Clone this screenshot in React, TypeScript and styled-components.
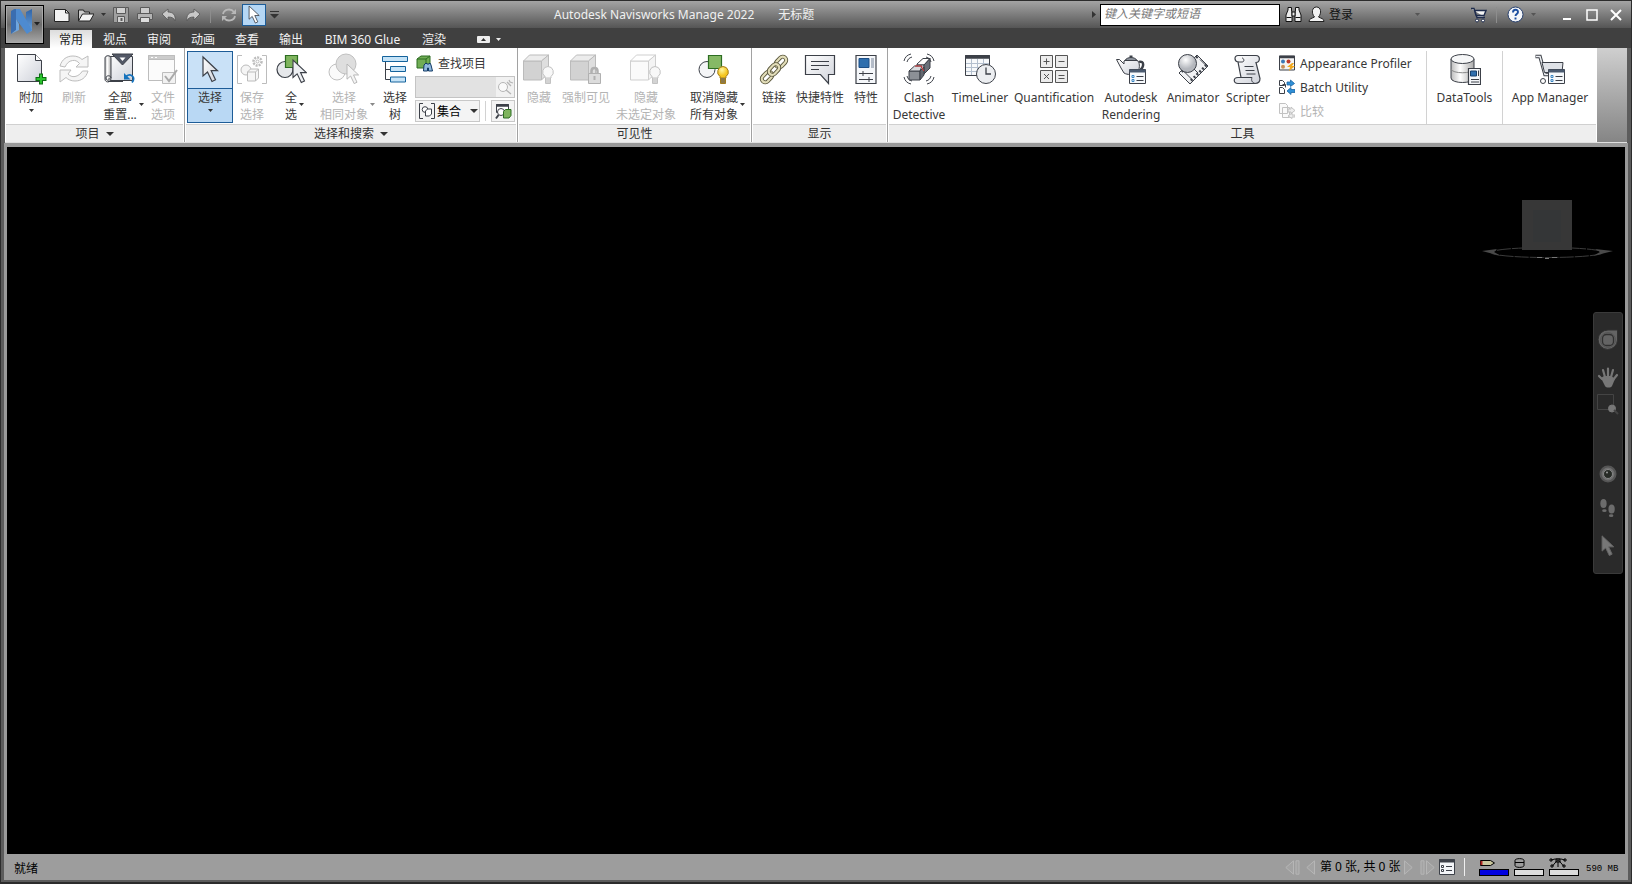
import React from "react";
import styled, { createGlobalStyle, css } from "styled-components";

const ui = `"Noto Sans", "Noto Sans CJK SC", sans-serif`;
const ink = "#3c4048";

const Global = createGlobalStyle`
  * { box-sizing: border-box; }
  body { margin: 0; background: #2c2c2c; font: 12px/17px ${ui}; color: #333; }
  button, input, select { font: inherit; color: inherit; margin: 0; }
  svg { display: block; flex: none; }
`;

/* ---------- window frame ---------- */
const Window = styled.div`
  display: flex;
  flex-direction: column;
  min-height: 100vh;
  padding-bottom: 2px;
  border: solid #2c2c2c;
  border-width: 1px 1px 2px 1px;
  background: #5c5c5c;
`;

const Header = styled.header`
  display: flex;
  height: 47px;
  padding-left: 4px;
  background: linear-gradient(#a4a4a4 0, #8a8a8a 9px, #555 27px, #404040 27px);
`;

const AppButton = styled.button`
  display: flex;
  align-items: center;
  justify-content: center;
  flex: none;
  width: 39px;
  height: 39px;
  margin-top: 4px;
  padding: 0;
  border: 1px solid #000;
  box-shadow: inset 0 0 0 1px #aaa;
  background: linear-gradient(#9a9a9a, #6c6c6c 50%, #a8a8a8);
`;

const HeaderRows = styled.div`
  display: flex;
  flex-direction: column;
  flex: 1;
  min-width: 0;
`;

const TitleBar = styled.div`
  display: flex;
  align-items: center;
  height: 27px;
`;

const QuickAccess = styled.div`
  display: flex;
  align-items: center;
  width: 510px;
  padding-left: 6px;
  flex: none;
`;

const QuickButton = styled.button<{ $w?: number; $before?: number; $active?: boolean }>`
  display: flex;
  align-items: center;
  justify-content: center;
  flex: none;
  width: ${(p) => p.$w ?? 24}px;
  height: 22px;
  margin-left: ${(p) => p.$before ?? 0}px;
  padding: 0;
  border: 1px solid ${(p) => (p.$active ? "#1d5c97" : "transparent")};
  background: ${(p) => (p.$active ? "#b5d7f5" : "none")};
`;

const ThinRule = styled.span<{ $gap?: number }>`
  width: 1px;
  height: 16px;
  margin: 0 ${(p) => p.$gap ?? 8}px;
  background: #8d8d8d;
`;

const Title = styled.h1`
  display: flex;
  gap: 24px;
  margin: 0;
  flex: 1;
  font: 12px/17px ${ui};
  color: #f0f0f0;
  white-space: nowrap;
`;

const InfoCenter = styled.div`
  display: flex;
  align-items: center;
`;

const WindowTools = styled(InfoCenter)`
  padding-right: 3px;
`;

const HelpSearch = styled.input`
  width: 180px;
  height: 22px;
  margin-right: 1px;
  padding: 0 3px 2px;
  border: 1px solid #000;
  border-radius: 0;
  background: #fff;
  outline: none;
  &::placeholder { color: #777; font-style: italic; opacity: 1; }
`;

const SignIn = styled.button`
  display: flex;
  align-items: center;
  gap: 4px;
  width: 105px;
  padding: 0 0 0 3px;
  border: 0;
  background: none;
  color: #111;
`;

const Tabs = styled.nav`
  display: flex;
  align-items: flex-end;
  height: 20px;
  padding-left: 6px;
`;

const Tab = styled.button<{ $w?: number; $active?: boolean }>`
  width: ${(p) => p.$w ?? 44}px;
  height: 18px;
  padding: 0;
  border: 0;
  background: none;
  color: #f2f2f2;
  line-height: 17px;
  white-space: nowrap;
  ${(p) =>
    p.$active &&
    css`
      width: 42px;
      margin-right: 1px;
      background: linear-gradient(#dcdcdc, #fff);
      color: #222;
    `}
`;

const RibbonToggle = styled.button`
  display: flex;
  align-items: center;
  gap: 6px;
  height: 16px;
  margin: 0 0 1px 21px;
  padding: 0;
  border: 0;
  background: none;
`;

/* ---------- ribbon ---------- */
const Ribbon = styled.div`
  display: flex;
  height: 95px;
  margin: 0 4px;
  border-bottom: 1px solid #e0e0e0;
  background: #fff;
`;

const Panel = styled.section<{ $w: number; $last?: boolean }>`
  display: flex;
  flex-direction: column;
  flex: none;
  width: ${(p) => p.$w}px;
  border-right: ${(p) => (p.$last ? "0" : "1px solid #a2a2a2")};
`;

const PanelBody = styled.div<{ $pad?: number }>`
  display: flex;
  align-items: flex-start;
  height: 76px;
  padding: 3px 0 0 ${(p) => p.$pad ?? 2}px;
`;

const PanelTitle = styled.h2`
  display: flex;
  align-items: center;
  justify-content: center;
  gap: 6px;
  height: 18px;
  margin: 0 1px;
  border-top: 1px solid #d0d0d0;
  background: #eeeeee;
  font: 12px/17px ${ui};
  color: #333;
`;

const RibbonEnd = styled.div`
  flex: 1;
  background: linear-gradient(#cfcfcf, #858585);
`;

const BigButton = styled.button<{ $w: number; $active?: boolean }>`
  position: relative;
  display: flex;
  flex-direction: column;
  align-items: center;
  flex: none;
  gap: 4px;
  width: ${(p) => p.$w}px;
  height: 72px;
  padding: 2px 0 0;
  border: 0;
  background: ${(p) =>
    p.$active ? "linear-gradient(#c9e1f7 37px, #1d5c97 37px, #1d5c97 38px, #b9d8f4 38px)" : "none"};
  box-shadow: ${(p) => (p.$active ? "inset 0 0 0 1px #1d5c97" : "none")};
  color: #383838;
  line-height: 17px;
  white-space: nowrap;
  &:disabled { color: #b4b4b4; }
`;

const Label = styled.span`
  position: relative;
  display: block;
  text-align: center;
`;

const Line = styled.span`
  display: block;
`;

const Below = styled.span`
  position: absolute;
  left: calc(50% - 2px);
  bottom: 11px;
`;

const Beside = styled.span`
  position: absolute;
  left: calc(100% + 2px);
  top: 14px;
`;

const Stack = styled.div<{ $w: number }>`
  display: flex;
  flex-direction: column;
  width: ${(p) => p.$w}px;
  margin-left: 2px;
`;

const SmallButton = styled.button`
  display: flex;
  align-items: center;
  gap: 5px;
  height: 24px;
  padding: 0 0 0 1px;
  border: 0;
  background: none;
  color: #383838;
  white-space: nowrap;
  &:disabled { color: #b4b4b4; }
`;

const FindBox = styled.div`
  display: flex;
  height: 22px;
  margin-top: 1px;
  border: 1px solid #c4c4c4;
  background: #e2e2e2;
  input { flex: 1; min-width: 0; border: 0; background: none; }
  button { width: 18px; padding: 0; border: 0; background: #f1f1f1; }
`;

const SetsRow = styled.div`
  display: flex;
  align-items: center;
  margin-top: 2px;
`;

const SetsBox = styled.label`
  display: flex;
  align-items: center;
  width: 65px;
  height: 22px;
  padding: 0 1px 0 3px;
  border: 1px solid #c8c8c8;
  background: #f4f4f4;
  select {
    flex: 1;
    min-width: 0;
    padding: 0 0 0 2px;
    border: 0;
    appearance: none;
    background: none;
    color: #000;
  }
`;

const FrameButton = styled.button`
  display: flex;
  align-items: center;
  justify-content: center;
  width: 24px;
  height: 22px;
  padding: 0;
  border: 1px solid #c8c8c8;
  background: #f4f4f4;
`;

const Divider = styled.span<{ $tall?: boolean }>`
  width: 1px;
  height: ${(p) => (p.$tall ? 73 : 20)}px;
  margin: ${(p) => (p.$tall ? "0" : "0 5px")};
  background: #d2d2d2;
`;

/* ---------- scene ---------- */
const Scene = styled.main`
  position: relative;
  flex: 1;
  margin: 0 3px;
  border: solid #9a9a9a;
  border-width: 4px 3px 0 3px;
  background: #000;
`;

const ViewCube = styled.div`
  position: absolute;
  top: 52px;
  right: 10px;
`;

const NavBar = styled.div`
  position: absolute;
  top: 165px;
  right: 2px;
  display: flex;
  flex-direction: column;
  align-items: center;
  width: 30px;
  height: 262px;
  padding: 16px 0 0;
  border: 1px solid #3a3a3a;
  border-radius: 3px;
  background: #2a2a2a;
`;

const NavButton = styled.button<{ $h: number }>`
  display: flex;
  align-items: flex-start;
  justify-content: center;
  width: 28px;
  height: ${(p) => p.$h}px;
  padding: 0;
  border: 0;
  background: none;
`;

/* ---------- status bar ---------- */
const Status = styled.footer`
  display: flex;
  align-items: center;
  height: 26px;
  margin: 0 3px;
  padding: 0 12px 0 10px;
  background: #9d9d9d;
  color: #000;
`;

const Ready = styled.span`
  flex: 1;
  padding-top: 3px;
`;

const Sheet = styled.span`
  width: 79px;
  margin: 0 5px 0 3px;
  padding-bottom: 2px;
  white-space: nowrap;
`;

const SheetButton = styled.button<{ $w: number }>`
  display: flex;
  width: ${(p) => p.$w}px;
  padding: 0;
  border: 0;
  background: none;
`;

const StatusRule = styled.span`
  width: 1px;
  height: 18px;
  margin: 0 14px 0 8px;
  background: #efefef;
`;

const Meter = styled.div`
  display: flex;
  flex-direction: column;
  gap: 1px;
  width: 30px;
  margin-right: 5px;
`;

const Bar = styled.span<{ $full?: boolean }>`
  height: 7px;
  border: 1px solid #000;
  background: ${(p) => (p.$full ? "#0000e0" : "#dcdcdc")};
`;

const Memory = styled.span`
  width: 32px;
  padding: 4px 0 0 2px;
  font: 9px/12px "Liberation Mono", monospace;
  white-space: nowrap;
`;

/* ---------- drawings ---------- */
const Caret = ({ s = 5, c = "#333" }: { s?: number; c?: string }) => (
  <svg width={s} height={Math.ceil(s / 2)} viewBox="0 0 10 5" preserveAspectRatio="none">
    <path d="M0 0h10L5 5z" fill={c} />
  </svg>
);

const Hidden = styled.svg`
  position: absolute;
`;

const Defs = () => (
  <Hidden width="0" height="0" aria-hidden="true">
    <defs>
      <linearGradient id="page" x2="1" y2="1"><stop offset="0" stopColor="#fff" /><stop offset="1" stopColor="#cfd2da" /></linearGradient>
      <linearGradient id="logo" x2="0" y2="1"><stop offset="0" stopColor="#2f63a6" /><stop offset="1" stopColor="#6ea6e0" /></linearGradient>
      <linearGradient id="metal" x2="1"><stop offset="0" stopColor="#bbb" /><stop offset=".4" stopColor="#fff" /><stop offset="1" stopColor="#aaa" /></linearGradient>
      <radialGradient id="ball" cx=".4" cy=".3"><stop offset="0" stopColor="#fff" /><stop offset="1" stopColor="#b4b7bd" /></radialGradient>
      <radialGradient id="bulb" cx=".4" cy=".3"><stop offset="0" stopColor="#fff7a0" /><stop offset="1" stopColor="#f5c51e" /></radialGradient>
    </defs>
  </Hidden>
);

type G = { children: React.ReactNode; s?: number; v?: number; color?: string };
const Icon = ({ children, s = 32, v = s, color = ink }: G) => (
  <svg width={s} height={s} viewBox={`0 0 ${v} ${v}`} fill="none" stroke={color} strokeWidth="1" aria-hidden="true">
    {children}
  </svg>
);

const cursor = "M0 0v19l4.500-4 4.500 9.500 3.500-1.700-4.300-9.100h6.300z";
const Cursor = ({ x, y, k = 1, stroke = ink, fill = "url(#page)" }: { x: number; y: number; k?: number; stroke?: string; fill?: string }) => (
  <path d={cursor} transform={`translate(${x} ${y}) scale(${k})`} fill={fill} stroke={stroke} strokeWidth="1.2" />
);
const Bulb = ({ on }: { on?: boolean }) => (
  <g stroke={on ? "#a37c1c" : "#c2c2c2"}>
    <path d="M22.500 24v6.500h5V24" fill={on ? "#777" : "#e4e4e4"} />
    <path d="M25 13.500a5.500 5.500 0 0 1 3 10v1.500h-6v-1.500a5.500 5.500 0 0 1 3-10z" fill={on ? "url(#bulb)" : "#f8f8f8"} />
    <path d="M22.500 27h5M22.500 29h5" />
  </g>
);
const Cube = ({ light }: { light?: boolean }) => (
  <g stroke={light ? "#cfcfcf" : "#bbb"} strokeLinejoin="round">
    <path d="M.5 8h18v19H.5z" fill={light ? "#fafafa" : "#d2d2d2"} />
    <path d="M.5 8l6-6h19l-7 6z" fill={light ? "#fff" : "#ececec"} />
    <path d="M18.500 8l7-6v18l-7 7z" fill={light ? "#f4f4f4" : "#dedede"} />
  </g>
);
const MiniWindow = ({ x, y }: { x: number; y: number }) => (
  <g transform={`translate(${x} ${y})`}>
    <path d="M.5.500h16v14H.5z" fill="#f6f9fc" />
    <path d="M.5 2h16" stroke="#4a5a70" strokeWidth="3" />
    <path d="M3 6.500h2v2H3zM3 10.500h2v2H3z" stroke="#3b87c4" />
    <path d="M7.500 7.500h7M7.500 11.500h7" />
  </g>
);

const Append = () => (
  <Icon>
    <path d="M2.500 1.500h18l6 6v21h-24z" fill="url(#page)" />
    <path d="M20.500 1.500v6h6" fill="#fff" />
    <path d="M26 20.500v11M20.500 26h11" stroke="#0d6e12" strokeWidth="4" />
    <path d="M26 21.500v9M21.500 26h9" stroke="#2bc42e" strokeWidth="2" />
  </Icon>
);
const Refresh = () => (
  <Icon color="#bdbdbd">
    <path d="M2 13C4 6 9 3 15 3c4 0 7 1.500 9 3.500L30 3v11H18l3.500-3.500C19.500 8 17 7 14.500 7.500 11 8 9 10 7 14z" fill="#f5f5f5" />
    <path d="M30 18c-2 7-7 10-13 10-4 0-7-1.500-9-3.500L2 29V17h11l-3 4c2 2 4 3 7 2.500 3-.5 5.500-2.500 7.500-5.500z" fill="#f5f5f5" />
  </Icon>
);
const ResetAll = () => (
  <Icon>
    <path d="M3 3.500h25.500v24H3z" fill="url(#page)" />
    <path d="M1 5c0-3 6-3 6 0v20c0 5-6 5-6 1z" fill="url(#metal)" />
    <path d="M7 25c0-3-5-3-5 0s4 3 3 0M4 28.500h15" />
    <path d="M8 1h21L18.500 12z" fill="#525866" /><path d="M15.500 4.500h6L18.500 8z" fill="#fff" stroke="none" />
    <path d="M22 23.500c5-4 10 1 6 6" stroke="#1673bd" strokeWidth="1.800" /><path d="M20 20v6.500h6.500z" fill="#1673bd" stroke="none" />
  </Icon>
);
const FileOptions = () => (
  <Icon color="#bdbdbd">
    <path d="M1.500 2.500h26v25h-26z" fill="#fbfbfb" /><path d="M1.500 2.500h26v4h-26z" fill="#ccc" /><path d="M4 4.500h2m2 0h2" stroke="#fff" />
    <path d="M15.500 19.500h13v11h-13z" fill="#f2f2f2" /><path d="M18 23l4 5 8-11" stroke="#aaa" strokeWidth="2" />
  </Icon>
);
const SaveSelection = () => (
  <Icon color="#bcbcbc">
    <path d="M6 2.500H1.500v28H6M26 2.500h4.500v28H26" /><circle cx="10" cy="17" r="5" fill="#f5f5f5" />
    <circle cx="21.500" cy="8.500" r="4" strokeWidth="2.500" strokeDasharray="2 1" /><circle cx="21.500" cy="8.500" r="1.500" />
    <path d="M11.500 19l3-3h8v9l-3 3h-8zM11.500 19h8v9m0-9l3-3" fill="#f6f6f6" />
  </Icon>
);
const SelectAll = () => (
  <Icon>
    <circle cx="10" cy="16.500" r="8" fill="#e6e8eb" strokeWidth="1.200" /><path d="M10.500 2.500h12v12h-12z" fill="#7fb45e" stroke="#2d6d22" strokeWidth="1.200" />
    <Cursor x={18} y={7} k={0.92} fill="#eef0f3" />
  </Icon>
);
const SelectSame = () => (
  <Icon color="#c0c0c0">
    <circle cx="9" cy="19" r="8" fill="#fafafa" /><circle cx="18" cy="11" r="10" fill="#dedede" /><Cursor x={19} y={11} k={0.8} stroke="#b5b5b5" fill="#f4f4f4" />
  </Icon>
);
const Tree = () => (
  <Icon>
    <path d="M6.500 8v18.500M6.500 16.500H11M6.500 26.500H11" />
    <g fill="#c5e3f7" stroke="#15639c"><path d="M3.500 3.500h25v5h-25zM11.500 13.500h15v5h-15zM11.500 24h15v5h-15z" /></g>
  </Icon>
);
const Unhide = () => (
  <Icon>
    <circle cx="9" cy="16.500" r="8" fill="#f4f5f7" /><path d="M10.500 2.500h13v13h-13z" fill="#86b966" stroke="#2d6d22" strokeWidth="1.200" /><Bulb on />
  </Icon>
);
const Lock = () => (
  <Icon>
    <Cube />
    <g stroke="#b0b0b0"><path d="M21.500 20v-2c0-4 6-4 6 0v2" strokeWidth="2.500" /><path d="M18.500 20.500h12v10h-12z" fill="#dcdcdc" /><path d="M24.500 23v4" strokeWidth="2" /></g>
  </Icon>
);
const Links = () => (
  <Icon>
    {[[23, 9], [9, 24], [16, 16.5]].map(([x, y], i) => (
      <g key={i} transform={`rotate(-47 ${x} ${y})`}>
        <rect x={x - 6} y={y - 3.5} width="12" height="7" rx="3.5" stroke="#59563c" strokeWidth="4" />
        <rect x={x - 6} y={y - 3.5} width="12" height="7" rx="3.5" stroke="#e2ddb9" strokeWidth="2.200" />
      </g>
    ))}
  </Icon>
);
const Quick = () => (
  <Icon>
    <path d="M1.500 2.500h29v19h-6v9l-8-9h-15z" fill="url(#page)" strokeWidth="1.200" /><path d="M7 8.500h18M7 12.500h18M7 16.500h8" />
  </Icon>
);
const Props = () => (
  <Icon>
    <path d="M6 2.500h20v28H6z" fill="#f5f7fa" strokeWidth="1.200" /><path d="M9 5.500h10v9H9z" fill="#2f6fae" stroke="#1d4f86" /><path d="M22.500 5v10" stroke="#b4bcc8" strokeWidth="3" />
    <path d="M9 20.500h14M9 26.500h14M13 18v5M19 24v5" />
  </Icon>
);
const Clash = () => (
  <Icon>
    <path d="M1 8c1-4 3-6 7-7M4 9c1-3 2-4 5-5M31 8c-1-4-3-6-7-7M28 9c-1-3-2-4-5-5M1 24c1 4 3 6 7 7M4 23c1 3 2 4 5 5M31 24c-1 4-3 6-7 7M28 23c-1 3-2 4-5 5" />
    <path d="M14 11l6-5.500h7L21 12h-7z" fill="#fff" /><path d="M14 12h7v5h-7z" fill="#f2f3f5" /><path d="M21 12l6-6.500V15l-6 6z" fill="#6a7079" />
    <path d="M6 18h11v9H6z" fill="#8c9096" /><path d="M6 18l5.500-5H19l-2 5z" fill="#d8dadd" /><path d="M17 18l4-4v8l-4 5z" fill="#62676f" />
    <path d="M12 13h6.500l1 3 1.500 2" stroke="#d83434" />
  </Icon>
);
const Timeline = () => (
  <Icon>
    <path d="M1.500 2.500h24v20h-24z" fill="#f7f9fb" /><path d="M1 4h25" strokeWidth="3.500" />
    <path d="M2 10.500h23M2 14.500h23M2 18.500h23M7.500 6v16M13.500 6v16M19.500 6v16" stroke="#b3bfce" />
    <circle cx="22" cy="21" r="9.500" fill="#eceef1" /><path d="M22 14.500V21h5" strokeWidth="1.300" />
  </Icon>
);
const Quantity = () => (
  <Icon color="#555">
    <g fill="#ececec"><path d="M2.500 2.500h12v12h-12zM17.500 2.500h12v12h-12zM2.500 17.500h12v12h-12zM17.500 17.500h12v12h-12z" /></g>
    <path d="M5.500 8.500h6M8.500 5.500v6M20.500 8.500h6M6 21l5 5M11 21l-5 5M20.500 22.500h6M20.500 25.500h6" />
  </Icon>
);
const Render = () => (
  <Icon>
    <path d="M24 9c5-2 6 5 0 9" strokeWidth="2.500" />
    <path d="M9 8c4-3 10-3 14 0 2 3 2 8-1 12-3 2-10 2-13 0L6 15 1.500 6.500h3L9 11z" fill="url(#page)" /><path d="M10 7.500c2-4 10-4 12 0z" fill="#8d939c" /><path d="M16 4.500V2.500" strokeWidth="3" />
    <MiniWindow x={14} y={16} />
  </Icon>
);
const Animator = () => (
  <Icon>
    <path d="M20 2l11 11-18 18L2 20z" fill="#f1f2f4" />
    <path d="M29.500 12L12.500 29M20.500 3.500L3.500 20" strokeWidth="2.500" strokeDasharray="2 2" /><path d="M23 6.500l6 6M6 17.500l9 9M13 12l8 8" />
    <circle cx="10.500" cy="10.500" r="9" fill="url(#ball)" />
  </Icon>
);
const Script = () => (
  <Icon>
    <path d="M6 2.500h18c5 0 4 7 0 7l4 16c0 4-2 5-5 5H6c-5 0-5-6 0-6h3L6 9c-4-1-4-6.500 0-6.500z" fill="url(#page)" strokeWidth="1.200" /><path d="M6 9h4c3 0 2-4 0-4M8 24.500h12c-1 3 0 5 3 6M12.500 13.500h9M13.500 17.500h9M14.500 21h9" />
  </Icon>
);
const Data = () => (
  <Icon>
    <path d="M2 6v19c0 6 23 6 23 0V6z" fill="url(#metal)" /><ellipse cx="13.500" cy="6" rx="11.500" ry="4.500" fill="#f6f7f8" /><path d="M2 16c1 5 22 5 23 0" stroke="#888" />
    <path d="M19.500 15.500h12v16h-12z" fill="#f5f7fa" strokeWidth="1.200" /><path d="M21.500 18h6v5h-6z" fill="#2f6fae" stroke="#173f6c" /><path d="M22 26.500h8M22 29h8M29.500 17.500V23" />
  </Icon>
);
const Cart = () => (
  <Icon>
    <path d="M1.500 3.500h4.500l5 18h16" strokeWidth="3.500" /><path d="M2 3.500h4l5 18h16" stroke="#eef0f3" strokeWidth="1.500" /><path d="M8 9.500h21l-1 10H10.500z" fill="#dfe2e7" /><circle cx="9" cy="28" r="2.500" fill="#fff" />
    <MiniWindow x={14} y={16} />
  </Icon>
);

const FindItems = () => (
  <Icon s={17} v={17}>
    <path d="M1 4l4-3h9v8l-4 4H1zM1 4h9v9M10 4l4-3" fill="#71ad55" stroke="#2d6d22" /><path d="M8 10l2-2 1 1h2l1-1 1 2 1.500 6h-4v-3h-1v3h-4z" fill="#8fb8dc" stroke="#123a66" />
  </Icon>
);
const FindGlass = () => (
  <Icon s={18} v={18} color="#b5b5b5"><circle cx="7" cy="9" r="4.500" fill="#fafafa" /><path d="M10 12l5 4M11 4l4 4M13 2l1 2 3 1" strokeWidth="1.300" /></Icon>
);
const Sets = () => (
  <Icon s={16} v={16}><path d="M4 .500H.5v15H4M12 .500h3.500v15H12" /><circle cx="6" cy="6.500" r="2.800" fill="#fff" /><path d="M6.500 8l2-2h4v5l-2 2h-4z" fill="#fff" /></Icon>
);
const Inspector = () => (
  <Icon s={17} v={17}>
    <path d="M1.500 1.500h12v8h-12z" fill="#fff" /><path d="M1 2.500h13" strokeWidth="2.500" /><circle cx="6" cy="9" r="3.500" fill="#fff" /><path d="M3.500 12L1 15.500" strokeWidth="2" /><path d="M8.500 8.500l2-2h5.500v6l-2 2.500H8.500z" fill="#7fb45e" stroke="#2d6d22" />
  </Icon>
);
const Appearance = () => (
  <Icon s={16} v={16}>
    <path d="M.5 1h15v14H.5z" fill="#f4f4f4" /><path d="M0 2h16" strokeWidth="2.500" /><g stroke="none"><circle cx="4" cy="6.500" r="2" fill="#3b79b8" /><circle cx="9.500" cy="6.500" r="2" fill="#c0392b" /><circle cx="4" cy="11.800" r="2" fill="#c98f5a" /><path d="M13 8l-5 4h3l-1 4 6-5h-3l2-3z" fill="#f2a81d" /></g>
  </Icon>
);
const Batch = () => (
  <Icon s={16} v={16}>
    <path d="M.5 1.500h3l2 2v3h-5zM.5 8.500h3l2 2v4h-5zM3.500 5.500h3v3" /><g stroke="#1c64a3" strokeWidth=".8" fill="#2f8fd6"><path d="M8 3h3.500V1L15.500 4.500l-4 3V6H8zM16 10.500h-4V8.500L8 12l4 3.500v-2h4z" /></g>
  </Icon>
);
const Compare = () => (
  <Icon s={16} v={16} color="#c2c2c2"><path d="M.5.500h6l2 2v8h-8zM3.500 4.500h7v10h-7z" fill="#fafafa" /><path d="M9 6h3V4l4 3.500-4 3V9H9zM16 12h-3v-2l-4 3 4 2.500V14h3z" fill="#eee" /></Icon>
);

/* quick access glyphs */
const q = { s: 16, v: 16, color: "#222" };
const NewDoc = () => <Icon {...q}><path d="M.5 2.500h11L15 6v8.500H.5z" fill="#f2f2f2" /><path d="M11.500 2.500V6H15" /></Icon>;
const OpenDoc = () => <Icon {...q}><path d="M.5 14V3h5l1 2h5v2" fill="#ccc" /><path d="M.5 14l4-7H16l-4 7z" fill="#f4f4f4" /></Icon>;
const Save = () => <Icon s={16} v={16} color="#5a5a5a"><path d="M.5.500h15v15H.5z" fill="#a0a0a0" /><path d="M3.500.500h9v6h-9zM4.500 9.500h7v6h-7z" fill="#d2d2d2" /><path d="M8.500 11v3" strokeWidth="2" /></Icon>;
const Print = () => <Icon s={16} v={16} color="#5a5a5a"><path d="M3.500.500h9v6h-9z" fill="#ccc" /><path d="M.5 6.500h15v6H.5z" fill="#b4b4b4" /><path d="M3.500 10.500h9v5h-9z" fill="#ddd" /></Icon>;
const Undo = ({ flip }: { flip?: boolean }) => (
  <Icon s={16} v={16} color="#555"><path transform={flip ? "matrix(-1 0 0 1 16 0)" : undefined} d="M1 7l6-5v3c5 0 8 3 7 9-1-3-3-4-7-4v3z" fill="#c8c8c8" strokeWidth=".8" /></Icon>
);
const Sync = () => <Icon s={16} v={16} color="#b8b8b8"><path d="M2 7c1-5 8-6 11-2M14 9c-1 5-8 6-11 2" strokeWidth="1.800" /><path d="M15 2v5h-5zM1 14V9h5z" fill="#b8b8b8" stroke="none" /></Icon>;
const Binoculars = () => (
  <Icon s={17} v={17} color="#111"><path d="M3 4V1.500h3.500V4l.5 3v8.500H1V9zM14 4V1.500h-3.500V4L10 7v8.500h6V9z" fill="#ececec" /><path d="M7 6h3v4H7zM1.500 11.500h5M10.500 11.500h5" fill="#ececec" /></Icon>
);
const User = () => <Icon s={17} v={17} color="#222"><path d="M1 15.500c0-3 3-3 5.500-4.500C3 7 4 1 8.500 1s5.500 6 2 10c2.500 1.500 5.500 1.500 5.500 4.500z" fill="#f2f2f2" /></Icon>;
const Shop = () => (
  <Icon s={17} v={17} color="#1f2c4c"><path d="M1 2.500h3l3 9h8M4.500 4.500H16l-2 5H6z" fill="#f4f4f4" strokeWidth="1.400" /><circle cx="7" cy="14.500" r="1.500" fill="#fff" /><circle cx="13" cy="14.500" r="1.500" fill="#fff" /></Icon>
);
const Help = () => (
  <Icon s={17} v={17} color="#27406e"><circle cx="8.500" cy="8.500" r="7.500" fill="#f4f6fa" /><path d="M6 6.500c0-3.500 5-3.500 5-.500 0 2-2.500 2-2.500 4M8.500 11.500v2" stroke="#1d4fa0" strokeWidth="1.900" /></Icon>
);

const Ring = () => (
  <svg width="134" height="62" viewBox="0 0 134 62" fill="none">
    <g stroke="#3c3c3c">
      <ellipse cx="66" cy="53.500" rx="56" ry="5" strokeDasharray="14 1" />
      <path d="M1 52l15-2-3 3 7 4zM132 52l-18-2 5 3-7 4z" fill="#4a4a4a" stroke="none" />
      <path d="M56 58.500h5m3 1h4m3-1h5" stroke="#777" />
    </g>
    <path d="M41 1h50v50H41z" fill="#373737" />
    <path d="M52 11h28v32H52z" fill="#343637" />
  </svg>
);

const Wheel = () => <Icon s={22} v={22} color="#303030"><path d="M11 1h9.500v10A9.700 9.700 0 1 1 11 1z" fill="#646464" /><circle cx="11" cy="11" r="7.500" stroke="#555" /><rect x="5.500" y="5.500" width="11" height="11" rx="4" strokeWidth="1.300" /></Icon>;
const Hand = () => (
  <Icon s={22} v={22} color="#777"><path d="M5 12L2 9M8 10L6 3M11 9V1.500M14 10l2-7M16 13l4-5" strokeWidth="2.200" strokeLinecap="round" /><path d="M4 11l3-2h7l3 2 1 1-3 7c-1 2-6 2-7 0z" fill="#777" stroke="none" /></Icon>
);
const ZoomWindow = () => <Icon s={22} v={22} color="#444"><path d="M.5 1.500h16v15H.5z" /><circle cx="15" cy="15.500" r="3.500" fill="#777" stroke="#777" /><path d="M17 17l4 4" strokeWidth="2" /></Icon>;
const Look = () => <Icon s={18} v={18} color="#555"><circle cx="9" cy="9" r="7.500" fill="#707070" strokeWidth="2" /><circle cx="9" cy="9" r="4.500" fill="#272b26" stroke="#888" /><circle cx="8" cy="7.500" r="1" fill="#999" stroke="none" /></Icon>;
const Walk = () => (
  <Icon s={18} v={20} color="none"><g fill="#6c6c6c"><ellipse cx="5" cy="5" rx="3.500" ry="5" /><ellipse cx="6" cy="13" rx="2.500" ry="1.500" /><ellipse cx="14" cy="11" rx="3.500" ry="5" /><ellipse cx="13.500" cy="18.500" rx="2.500" ry="1.500" /></g></Icon>
);

const Pager = ({ flip, bar }: { flip?: boolean; bar?: boolean }) => (
  <svg width={bar ? 15 : 9} height="15" viewBox={bar ? "0 0 15 15" : "0 0 9 15"} fill="#a3a3a3" stroke="#b6b6b6">
    <g transform={flip ? `matrix(-1 0 0 1 ${bar ? 15 : 9} 0)` : undefined}>
      <path d="M8.500.800v13.400L.8 7.500z" />{bar && <path d="M11 .800h3v13.400h-3z" />}
    </g>
  </svg>
);

const Big = ({ w, icon, lines, off, on, below, beside }: { w: number; icon: React.ReactNode; lines: string[]; off?: boolean; on?: boolean; below?: boolean; beside?: boolean }) => (
  <BigButton type="button" $w={w} disabled={off} $active={on}>
    {icon}
    <Label>
      {lines.map((l) => <Line key={l}>{l}</Line>)}
      {beside && <Beside><Caret c={off ? "#888" : "#333"} /></Beside>}
    </Label>
    {below && <Below><Caret /></Below>}
  </BigButton>
);

export default function App() {
  return (
    <Window>
      <Global />
      <Defs />
      <Header>
        <AppButton type="button" aria-label="Navisworks">
          <svg width="31" height="31" viewBox="0 0 31 31">
            <path d="M17 3l6-3v22l-6 2z" fill="url(#logo)" /><path d="M2 2l5-3v22l-5 4z" fill="#3a6db0" /><path d="M7-1l4 1 12 21-5 4L7 10z" fill="#4e8bd0" /><path d="M7 10l3 5v6l-8 4 5-4z" fill="#6ea6e0" />
            <path d="M25 13h6l-3 3.500z" fill="#222" />
          </svg>
        </AppButton>
        <HeaderRows>
          <TitleBar>
            <QuickAccess>
              <QuickButton type="button" aria-label="新建"><NewDoc /></QuickButton>
              <QuickButton type="button" aria-label="打开"><OpenDoc /></QuickButton>
              <QuickButton type="button" $w={11} aria-label="打开选项"><Caret /></QuickButton>
              <QuickButton type="button" aria-label="保存"><Save /></QuickButton>
              <QuickButton type="button" aria-label="打印"><Print /></QuickButton>
              <QuickButton type="button" aria-label="撤消"><Undo /></QuickButton>
              <QuickButton type="button" aria-label="恢复"><Undo flip /></QuickButton>
              <ThinRule $gap={5} />
              <QuickButton type="button" $w={26} aria-label="刷新"><Sync /></QuickButton>
              <QuickButton type="button" $active aria-label="选择"><Icon s={18} v={22}><Cursor x={5} y={0} k={0.85} fill="#fff" /></Icon></QuickButton>
              <QuickButton type="button" $w={16} aria-label="自定义">
                <svg width="9" height="8" viewBox="0 0 9 8" fill="#333"><path d="M0 0h9v1H0zM0 3h9L4.500 7.500z" /></svg>
              </QuickButton>
            </QuickAccess>
            <Title><span>Autodesk Navisworks Manage 2022</span><span>无标题</span></Title>
            <InfoCenter>
              <QuickButton type="button" $w={12} aria-label="展开">
                <svg width="4" height="7" viewBox="0 0 4 7"><path d="M0 0l4 3.500L0 7z" fill="#333" /></svg>
              </QuickButton>
              <HelpSearch aria-label="搜索" placeholder="键入关键字或短语" />
              <QuickButton type="button" aria-label="查找"><Binoculars /></QuickButton>
              <SignIn type="button"><User />登录</SignIn>
              <QuickButton type="button" $w={14} aria-label="帐户"><Caret c="#555" /></QuickButton>
              <QuickButton type="button" $w={20} $before={44} aria-label="商店"><Shop /></QuickButton>
            </InfoCenter>
            <WindowTools>
              <ThinRule />
              <QuickButton type="button" $w={20} aria-label="帮助"><Help /></QuickButton>
              <QuickButton type="button" $w={16} aria-label="帮助选项"><Caret c="#555" /></QuickButton>
              <QuickButton type="button" $w={27} $before={12} aria-label="最小化"><svg width="8" height="12"><path d="M0 10h8" stroke="#fff" strokeWidth="2" /></svg></QuickButton>
              <QuickButton type="button" aria-label="最大化"><svg width="12" height="12"><path d="M1 1h10v10H1z" fill="none" stroke="#fff" strokeWidth="1.500" /></svg></QuickButton>
              <QuickButton type="button" aria-label="关闭"><svg width="12" height="12"><path d="M1 1l10 10M11 1L1 11" stroke="#fff" strokeWidth="2" /></svg></QuickButton>
            </WindowTools>
          </TitleBar>
          <Tabs>
            <Tab type="button" $active>常用</Tab>
            {["视点", "审阅", "动画", "查看", "输出"].map((t) => <Tab type="button" key={t}>{t}</Tab>)}
            <Tab type="button" $w={99}>BIM 360 Glue</Tab>
            <Tab type="button">渲染</Tab>
            <RibbonToggle type="button" aria-label="最小化功能区">
              <svg width="13" height="7"><rect width="13" height="7" rx="1" fill="#eee" /><path d="M4 5l2.500-3L9 5z" fill="#333" /></svg>
              <Caret c="#eee" />
            </RibbonToggle>
          </Tabs>
        </HeaderRows>
      </Header>

      <Ribbon>
        <Panel $w={180}>
          <PanelBody $pad={5}>
            <Big w={42} icon={<Append />} lines={["附加"]} below />
            <Big w={44} icon={<Refresh />} lines={["刷新"]} off />
            <Big w={48} icon={<ResetAll />} lines={["全部", "重置..."]} beside />
            <Big w={38} icon={<FileOptions />} lines={["文件", "选项"]} off />
          </PanelBody>
          <PanelTitle>项目<Caret s={8} /></PanelTitle>
        </Panel>
        <Panel $w={333}>
          <PanelBody>
            <Big w={46} icon={<Icon><Cursor x={9} y={4} /></Icon>} lines={["选择"]} on below />
            <Big w={38} icon={<SaveSelection />} lines={["保存", "选择"]} off />
            <Big w={40} icon={<SelectAll />} lines={["全", "选"]} beside />
            <Big w={66} icon={<SelectSame />} lines={["选择", "相同对象"]} off beside />
            <Big w={36} icon={<Tree />} lines={["选择", "树"]} />
            <Stack $w={100}>
              <SmallButton type="button"><FindItems />查找项目</SmallButton>
              <FindBox>
                <input aria-label="快速查找" disabled />
                <button type="button" aria-label="查找" disabled><FindGlass /></button>
              </FindBox>
              <SetsRow>
                <SetsBox>
                  <Sets />
                  <select aria-label="集合"><option>集合</option></select>
                  <Caret s={8} />
                </SetsBox>
                <Divider />
                <FrameButton type="button" aria-label="选择检验器"><Inspector /></FrameButton>
              </SetsRow>
            </Stack>
          </PanelBody>
          <PanelTitle>选择和搜索<Caret s={8} /></PanelTitle>
        </Panel>
        <Panel $w={234}>
          <PanelBody>
            <Big w={38} icon={<Icon><Cube /><Bulb /></Icon>} lines={["隐藏"]} off />
            <Big w={56} icon={<Lock />} lines={["强制可见"]} off />
            <Big w={64} icon={<Icon><Cube light /><Bulb /></Icon>} lines={["隐藏", "未选定对象"]} off />
            <Big w={72} icon={<Unhide />} lines={["取消隐藏", "所有对象"]} beside />
          </PanelBody>
          <PanelTitle>可见性</PanelTitle>
        </Panel>
        <Panel $w={136}>
          <PanelBody $pad={4}>
            <Big w={36} icon={<Links />} lines={["链接"]} />
            <Big w={56} icon={<Quick />} lines={["快捷特性"]} />
            <Big w={36} icon={<Props />} lines={["特性"]} />
          </PanelBody>
          <PanelTitle>显示</PanelTitle>
        </Panel>
        <Panel $w={709} $last>
          <PanelBody>
            <Big w={58} icon={<Clash />} lines={["Clash", "Detective"]} />
            <Big w={64} icon={<Timeline />} lines={["TimeLiner"]} />
            <Big w={84} icon={<Quantity />} lines={["Quantification"]} />
            <Big w={70} icon={<Render />} lines={["Autodesk", "Rendering"]} />
            <Big w={54} icon={<Animator />} lines={["Animator"]} />
            <Big w={56} icon={<Script />} lines={["Scripter"]} />
            <Stack $w={148}>
              <SmallButton type="button"><Appearance />Appearance Profiler</SmallButton>
              <SmallButton type="button"><Batch />Batch Utility</SmallButton>
              <SmallButton type="button" disabled><Compare />比较</SmallButton>
            </Stack>
            <Divider $tall />
            <Big w={75} icon={<Data />} lines={["DataTools"]} />
            <Divider $tall />
            <Big w={94} icon={<Cart />} lines={["App Manager"]} />
          </PanelBody>
          <PanelTitle>工具</PanelTitle>
        </Panel>
        <RibbonEnd />
      </Ribbon>

      <Scene>
        <ViewCube><Ring /></ViewCube>
        <NavBar>
          <NavButton $h={38} type="button" aria-label="导航控制盘"><Wheel /></NavButton>
          <NavButton $h={26} type="button" aria-label="平移"><Hand /></NavButton>
          <NavButton $h={72} type="button" aria-label="缩放窗口"><ZoomWindow /></NavButton>
          <NavButton $h={34} type="button" aria-label="环视"><Look /></NavButton>
          <NavButton $h={36} type="button" aria-label="漫游"><Walk /></NavButton>
          <NavButton $h={36} type="button" aria-label="选择"><Icon s={22} v={26}><Cursor x={6} y={1} k={0.95} fill="#777" stroke="#666" /></Icon></NavButton>
        </NavBar>
      </Scene>

      <Status>
        <Ready>就绪</Ready>
        <SheetButton $w={21} type="button" aria-label="第一张"><Pager bar /></SheetButton>
        <SheetButton $w={11} type="button" aria-label="上一张"><Pager /></SheetButton>
        <Sheet>第 0 张, 共 0 张</Sheet>
        <SheetButton $w={16} type="button" aria-label="下一张"><Pager flip /></SheetButton>
        <SheetButton $w={19} type="button" aria-label="最后一张"><Pager flip bar /></SheetButton>
        <SheetButton $w={17} type="button" aria-label="图纸浏览器">
          <Icon s={16} v={16}><path d="M.5.500h15v15H.5z" fill="#f3f5f8" /><path d="M0 2h16" strokeWidth="3" /><path d="M2.500 6.500h2v2h-2zM2.500 10.500h2v2h-2zM7 7.500h6M7 11.500h6" /></Icon>
        </SheetButton>
        <StatusRule />
        <Meter>
          <svg width="18" height="10" viewBox="0 0 18 10" stroke="#000"><path d="M1.500 2.500h10l4 2.500-4 2.500h-10z" fill="#c9c69c" /><path d="M2.500 3v4" stroke="#a22" strokeWidth="2" /></svg>
          <Bar $full />
        </Meter>
        <Meter>
          <svg width="11" height="10" viewBox="0 0 11 10" fill="none" stroke="#000"><path d="M1 2.500C1 0 10 0 10 2.500v5C10 10 1 10 1 7.500zM1 4.500h9" /></svg>
          <Bar />
        </Meter>
        <Meter>
          <svg width="18" height="10" viewBox="0 0 18 10" fill="none" stroke="#000"><path d="M2 2l4-1h6l4 1M8.500 2l-5 6M9.500 2l5 6M9 2v7M1 1h2v2H1zM15 1h2v2h-2zM7 1h4v3H7zM2 7h2v2H2zM14 7h2v2h-2z" /></svg>
          <Bar />
        </Meter>
        <Memory>590 MB</Memory>
      </Status>
    </Window>
  );
}
